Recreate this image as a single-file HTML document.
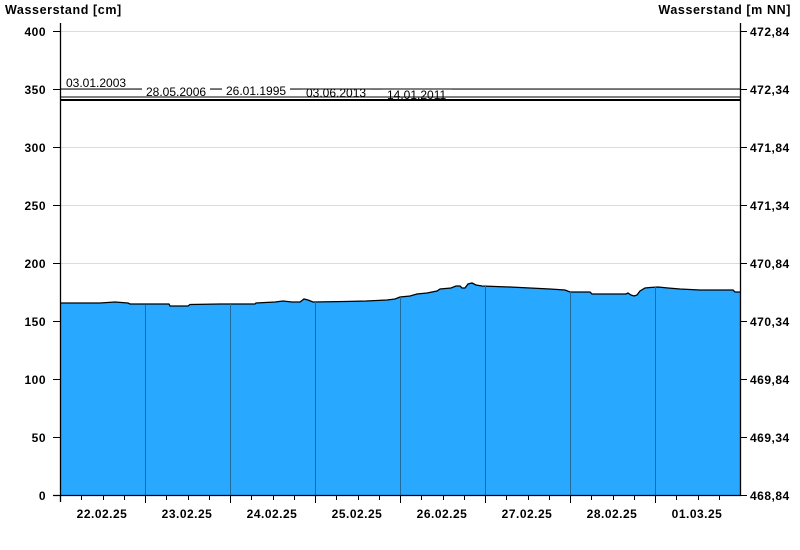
<!DOCTYPE html>
<html><head><meta charset="utf-8"><style>
html,body{margin:0;padding:0;background:#fff;}
svg{display:block;font-family:"Liberation Sans",Arial,sans-serif;}
.b{font-weight:bold;font-size:12px;fill:#000;letter-spacing:0.5px;}
.t{font-weight:bold;font-size:12.5px;fill:#000;letter-spacing:0.6px;}
.s{font-size:12px;fill:#000;}
</style></head><body>
<svg width="800" height="550" viewBox="0 0 800 550" xmlns="http://www.w3.org/2000/svg">
<rect width="800" height="550" fill="#fff"/>
<g stroke="#dcdcdc" stroke-width="1">
<line x1="60" y1="31.5" x2="740" y2="31.5"/>
<line x1="60" y1="89.5" x2="740" y2="89.5"/>
<line x1="60" y1="147.5" x2="740" y2="147.5"/>
<line x1="60" y1="205.5" x2="740" y2="205.5"/>
<line x1="60" y1="263.5" x2="740" y2="263.5"/>
<line x1="60" y1="321.5" x2="740" y2="321.5"/>
<line x1="60" y1="379.5" x2="740" y2="379.5"/>
<line x1="60" y1="437.5" x2="740" y2="437.5"/>
</g>
<polygon fill="#29a8ff" stroke="none" points="60,495 60,303 100,303 115,302 128,303 130,304 169,304 170,306 188,306 190,304.5 220,304 255,304 256,303 275,302 283,301 292,302 300,302 304,299 308,300 313,302 345,301.5 366,301 387,300 395,299 400,297 410,296 417,294 427,293 437,291 440,289 451,288 456,286 460,286 462,288 465,288 468,284 472,283 476,285 482,286 510,287 530,288 550,289 565,290 570,292 590,292 592,294 626,294 628,293 631,295 634,296 637,295 640,291 645,288 650,287.5 658,287 668,288 680,289 700,290 733,290 735,292 740,292 740,495"/>
<polyline fill="none" stroke="#000" stroke-width="1.3" points="60,303 100,303 115,302 128,303 130,304 169,304 170,306 188,306 190,304.5 220,304 255,304 256,303 275,302 283,301 292,302 300,302 304,299 308,300 313,302 345,301.5 366,301 387,300 395,299 400,297 410,296 417,294 427,293 437,291 440,289 451,288 456,286 460,286 462,288 465,288 468,284 472,283 476,285 482,286 510,287 530,288 550,289 565,290 570,292 590,292 592,294 626,294 628,293 631,295 634,296 637,295 640,291 645,288 650,287.5 658,287 668,288 680,289 700,290 733,290 735,292 740,292"/>
<g stroke="#1f6c9c" stroke-width="1">
<line x1="145.5" y1="305" x2="145.5" y2="495"/>
<line x1="230.5" y1="304" x2="230.5" y2="495"/>
<line x1="315.5" y1="302" x2="315.5" y2="495"/>
<line x1="400.5" y1="297" x2="400.5" y2="495"/>
<line x1="485.5" y1="286" x2="485.5" y2="495"/>
<line x1="570.5" y1="292" x2="570.5" y2="495"/>
<line x1="655.5" y1="287" x2="655.5" y2="495"/>
</g>
<g stroke="#000">
<line x1="60" y1="89" x2="740" y2="89" stroke-width="1"/>
<line x1="60" y1="97" x2="740" y2="97" stroke-width="1"/>
<line x1="60" y1="100" x2="740" y2="100" stroke-width="2"/>
</g>
<rect x="142" y="85" width="68" height="11.5" fill="#fff"/>
<rect x="222" y="84" width="68" height="12.5" fill="#fff"/>
<rect x="302" y="89.5" width="68" height="7" fill="#fff"/>
<rect x="382" y="89.5" width="70" height="7" fill="#fff"/>
<text class="s" x="66" y="87">03.01.2003</text>
<text class="s" x="146" y="96">28.05.2006</text>
<text class="s" x="226" y="95">26.01.1995</text>
<text class="s" x="306" y="97">03.06.2013</text>
<text class="s" x="387" y="99">14.01.2011</text>
<g stroke="#000" stroke-width="1.3">
<line x1="60.5" y1="23" x2="60.5" y2="502"/>
<line x1="740.5" y1="23" x2="740.5" y2="495"/>
<line x1="53" y1="495.5" x2="741" y2="495.5"/>
</g>
<g stroke="#000" stroke-width="1">
<line x1="53" y1="31.5" x2="60" y2="31.5"/><line x1="53" y1="89.5" x2="60" y2="89.5"/>
<line x1="53" y1="147.5" x2="60" y2="147.5"/><line x1="53" y1="205.5" x2="60" y2="205.5"/>
<line x1="53" y1="263.5" x2="60" y2="263.5"/><line x1="53" y1="321.5" x2="60" y2="321.5"/>
<line x1="53" y1="379.5" x2="60" y2="379.5"/><line x1="53" y1="437.5" x2="60" y2="437.5"/>
<line x1="740" y1="31.5" x2="747" y2="31.5"/><line x1="740" y1="89.5" x2="747" y2="89.5"/>
<line x1="740" y1="147.5" x2="747" y2="147.5"/><line x1="740" y1="205.5" x2="747" y2="205.5"/>
<line x1="740" y1="263.5" x2="747" y2="263.5"/><line x1="740" y1="321.5" x2="747" y2="321.5"/>
<line x1="740" y1="379.5" x2="747" y2="379.5"/><line x1="740" y1="437.5" x2="747" y2="437.5"/>
<line x1="740" y1="495.5" x2="747" y2="495.5"/>
<line x1="145.5" y1="495" x2="145.5" y2="503"/><line x1="230.5" y1="495" x2="230.5" y2="503"/>
<line x1="315.5" y1="495" x2="315.5" y2="503"/><line x1="400.5" y1="495" x2="400.5" y2="503"/>
<line x1="485.5" y1="495" x2="485.5" y2="503"/><line x1="570.5" y1="495" x2="570.5" y2="503"/>
<line x1="655.5" y1="495" x2="655.5" y2="503"/>
</g>
<g stroke="#000" stroke-width="1">
<line x1="81.5" y1="495" x2="81.5" y2="500"/><line x1="103.5" y1="495" x2="103.5" y2="500"/><line x1="124.5" y1="495" x2="124.5" y2="500"/>
<line x1="166.5" y1="495" x2="166.5" y2="500"/><line x1="188.5" y1="495" x2="188.5" y2="500"/><line x1="209.5" y1="495" x2="209.5" y2="500"/>
<line x1="251.5" y1="495" x2="251.5" y2="500"/><line x1="273.5" y1="495" x2="273.5" y2="500"/><line x1="294.5" y1="495" x2="294.5" y2="500"/>
<line x1="336.5" y1="495" x2="336.5" y2="500"/><line x1="358.5" y1="495" x2="358.5" y2="500"/><line x1="379.5" y1="495" x2="379.5" y2="500"/>
<line x1="421.5" y1="495" x2="421.5" y2="500"/><line x1="443.5" y1="495" x2="443.5" y2="500"/><line x1="464.5" y1="495" x2="464.5" y2="500"/>
<line x1="506.5" y1="495" x2="506.5" y2="500"/><line x1="528.5" y1="495" x2="528.5" y2="500"/><line x1="549.5" y1="495" x2="549.5" y2="500"/>
<line x1="591.5" y1="495" x2="591.5" y2="500"/><line x1="613.5" y1="495" x2="613.5" y2="500"/><line x1="634.5" y1="495" x2="634.5" y2="500"/>
<line x1="676.5" y1="495" x2="676.5" y2="500"/><line x1="698.5" y1="495" x2="698.5" y2="500"/><line x1="719.5" y1="495" x2="719.5" y2="500"/>
</g>
<text class="t" x="5" y="14">Wasserstand [cm]</text>
<text class="t" x="791" y="14" text-anchor="end">Wasserstand [m NN]</text>
<g class="b" text-anchor="end">
<text x="46" y="36">400</text><text x="46" y="94">350</text><text x="46" y="152">300</text>
<text x="46" y="210">250</text><text x="46" y="268">200</text><text x="46" y="326">150</text>
<text x="46" y="384">100</text><text x="46" y="442">50</text><text x="46" y="500">0</text>
</g>
<g class="b">
<text x="750" y="36">472,84</text><text x="750" y="94">472,34</text><text x="750" y="152">471,84</text>
<text x="750" y="210">471,34</text><text x="750" y="268">470,84</text><text x="750" y="326">470,34</text>
<text x="750" y="384">469,84</text><text x="750" y="442">469,34</text><text x="750" y="500">468,84</text>
</g>
<g class="b" text-anchor="middle">
<text x="102" y="518">22.02.25</text><text x="187" y="518">23.02.25</text><text x="272" y="518">24.02.25</text>
<text x="357" y="518">25.02.25</text><text x="442" y="518">26.02.25</text><text x="527" y="518">27.02.25</text>
<text x="612" y="518">28.02.25</text><text x="697" y="518">01.03.25</text>
</g>
</svg>
</body></html>
